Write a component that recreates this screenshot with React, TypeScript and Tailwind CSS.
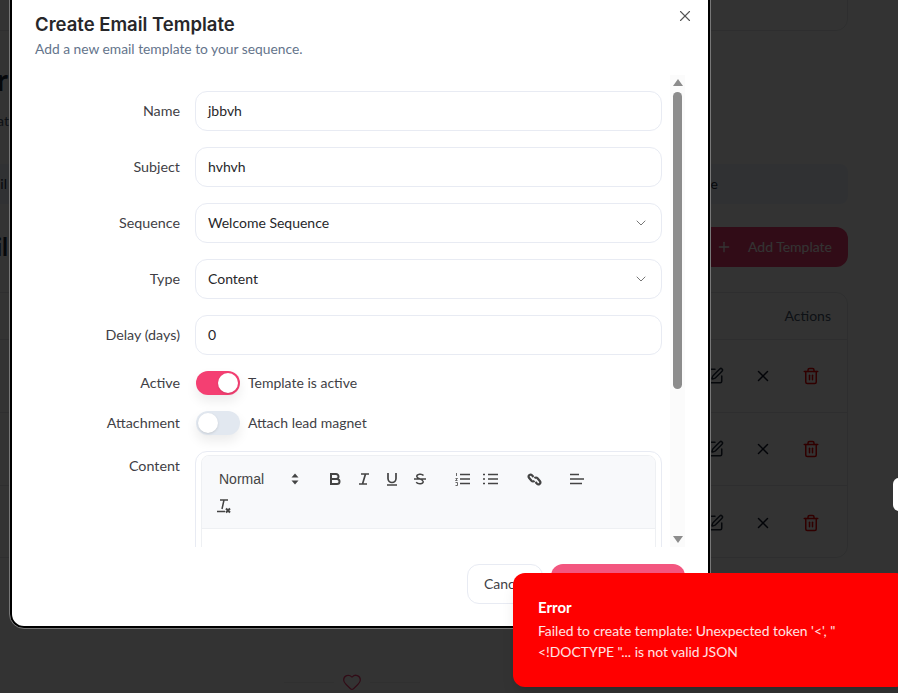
import { ChevronDown, Heart, Plus, SquarePen, Trash2, X } from "lucide-react"

const fields = [
  { label: "Name", value: "jbbvh" },
  { label: "Subject", value: "hvhvh" },
  { label: "Sequence", value: "Welcome Sequence", select: true },
  { label: "Type", value: "Content", select: true },
  { label: "Delay (days)", value: "0" },
]

function Toggle({ on }: { on: boolean }) {
  return (
    <div
      className={`flex h-6 w-[44px] items-center rounded-full p-[2px] shadow-[0_6px_12px_rgba(0,0,0,0.08)] ${
        on ? "justify-end bg-[#f43f72]" : "justify-start bg-[#e2e8f0]"
      }`}
    >
      <div className="h-5 w-5 rounded-full bg-white shadow-sm" />
    </div>
  )
}

function Toolbar() {
  return (
    <div className="h-[73px] border-b border-[#eef0f3] bg-[#f8f9fb] pl-[17px] text-[#444]">
      <div className="flex h-[46px] items-center">
        <span className="w-[72px] font-['Liberation_Sans',sans-serif] text-sm">Normal</span>
        <svg width="8" height="12" viewBox="0 0 8 12" className="mr-[29px] fill-[#444]">
          <path d="M4 0.5 7.5 4.5H.5zM4 11.5.5 7.5h7z" />
        </svg>
        <svg width="14" height="14" viewBox="0 0 14 14" fill="none" stroke="#444" strokeWidth="2" className="mr-[15px]">
          <path d="M3 2h5a2.5 2.5 0 0 1 0 5H3zM3 7h6a2.5 2.5 0 0 1 0 5H3z" />
        </svg>
        <svg width="14" height="14" viewBox="0 0 14 14" fill="none" stroke="#444" strokeWidth="1.7" className="mr-[14px]">
          <path d="M4 2h8M2 12h8M8.5 2 5.5 12" />
        </svg>
        <svg width="14" height="14" viewBox="0 0 14 14" fill="none" stroke="#444" strokeWidth="1.7" className="mr-[14px]">
          <path d="M3 1v5.5a4 4 0 0 0 8 0V1M2 13h10" />
        </svg>
        <svg width="14" height="14" viewBox="0 0 14 14" fill="none" stroke="#444" strokeWidth="1.5" className="mr-[28px]">
          <path d="M10.5 3.5C9 1.5 3.5 1.8 3.8 4.8 4 6.5 9.8 7 10.2 9.5 10.5 12.3 5 12.5 3.2 10.3M1 7h12" />
        </svg>
        <svg width="15" height="14" viewBox="0 0 15 14" fill="none" stroke="#444" strokeWidth="1.7" className="mr-[13px]">
          <path d="M5 2.5h10M5 7h10M5 11.5h10" />
          <path d="M1.5 1v3M.5 6.5h2L.5 8.5h2M.5 10.5h2v3h-2" strokeWidth="0.8" />
        </svg>
        <svg width="15" height="14" viewBox="0 0 15 14" fill="none" stroke="#444" strokeWidth="1.7" className="mr-[29px]">
          <path d="M5 2.5h10M5 7h10M5 11.5h10M0 2.5h2M0 7h2M0 11.5h2" />
        </svg>
        <svg width="15" height="15" viewBox="0 0 15 15" fill="none" stroke="#444" strokeWidth="2.2" className="mr-[28px]">
          <path d="M6.5 5 5 3.2a2 2 0 0 0-3 2.6l2.5 3a2 2 0 0 0 3 0M8.5 10l1.5 1.8a2 2 0 0 0 3-2.6l-2.5-3a2 2 0 0 0-3 0" />
        </svg>
        <svg width="14" height="14" viewBox="0 0 14 14" fill="none" stroke="#444" strokeWidth="1.7">
          <path d="M0 2.5h9M0 7h14M0 11.5h12" />
        </svg>
      </div>
      <svg width="16" height="16" viewBox="0 0 16 16" fill="none" stroke="#444" className="mt-[-4px] ml-[-3px]">
        <path d="M4 2h8M8 2 6 11M1 13.5h8" strokeWidth="1.5" />
        <path d="M10 10.5l4 4M14 10.5l-4 4" strokeWidth="2" />
      </svg>
    </div>
  )
}

function Modal() {
  return (
    <div className="absolute left-[10px] top-[-20px] h-[648px] w-[700px] rounded-[14px] border-2 border-black bg-white font-['Lato',sans-serif] outline outline-1 outline-[#777]">
      <X className="absolute right-[14px] top-[25px] h-[18px] w-[18px] text-[#555]" strokeWidth={1.5} />
      <div className="px-[23px] pt-[28px]">
        <h2 className="font-['Inter',sans-serif] text-[18.5px] font-semibold leading-7 text-[#27272a]">Create Email Template</h2>
        <p className="mt-[1px] text-[13.8px] leading-5 text-[#64748b]">Add a new email template to your sequence.</p>
      </div>

      <div className="mt-[16px] flex h-[472px] overflow-hidden">
        <div className="w-[650px] shrink-0 pt-[16px]">
          {fields.map((f) => (
            <div key={f.label} className="mb-4 flex h-10 items-center">
              <label className="w-[168px] text-right text-[14.3px] text-[#3f3f46]">{f.label}</label>
              <div className="ml-[15px] flex h-10 w-[467px] items-center justify-between rounded-xl border border-[#e8ebf3] px-3 text-sm text-[#27272a]">
                {f.value}
                {f.select && <ChevronDown className="h-4 w-4 text-[#777]" strokeWidth={1.5} />}
              </div>
            </div>
          ))}
          <div className="flex h-6 items-center">
            <label className="w-[168px] text-right text-[14.3px] text-[#3f3f46]">Active</label>
            <div className="ml-[16px]"><Toggle on /></div>
            <span className="ml-2 text-sm text-[#3f3f46]">Template is active</span>
          </div>
          <div className="mt-4 flex h-6 items-center">
            <label className="w-[168px] text-right text-[14.3px] text-[#3f3f46]">Attachment</label>
            <div className="ml-[16px]"><Toggle on={false} /></div>
            <span className="ml-2 text-sm text-[#3f3f46]">Attach lead magnet</span>
          </div>
          <div className="mt-[16px] flex">
            <label className="w-[168px] pt-[4px] text-right text-[14.3px] text-[#3f3f46]">Content</label>
            <div className="ml-[15px] h-[200px] w-[467px] rounded-xl border border-[#e8ebf3] px-[5px] py-[3px]">
              <div className="h-full overflow-hidden rounded-t-lg border border-[#eef0f3]">
                <Toolbar />
              </div>
            </div>
          </div>
        </div>
        <div className="ml-[8px] flex h-full w-[15px] flex-col items-center bg-[#fbfbfb]">
          <div className="mt-[4px] h-0 w-0 border-x-[5px] border-b-[7px] border-x-transparent border-b-[#8c8c8c]" />
          <div className="mt-[6px] h-[297px] w-[9px] rounded-full bg-[#8c8c8c]" />
          <div className="mt-auto mb-[4px] h-0 w-0 border-x-[5px] border-t-[7px] border-x-transparent border-t-[#8c8c8c]" />
        </div>
      </div>

      <div className="mt-[17px] flex justify-end gap-2 pr-[23px]">
        <button className="h-10 w-[76px] rounded-xl border border-[#e8ebf3] bg-white pl-[16px] text-left text-sm text-[#3f3f46]">Cancel</button>
        <button className="h-10 w-[134px] rounded-xl bg-[#f3567f] text-sm text-white">Create Template</button>
      </div>
    </div>
  )
}

function BackgroundPage() {
  return (
    <div className="ml-[-200px] flex h-full w-[1048px] flex-col font-['Lato',sans-serif] text-[#1e293b]">
      <div className="mt-[-40px] h-[71px] w-full rounded-xl border border-[#e5e7eb]" />
      <h1 className="mt-[30px] pr-[840px] text-right text-3xl font-bold leading-9">Manager</h1>
      <p className="mt-[14px] pr-[839px] text-right text-sm text-[#475569]">Format</p>
      <div className="mt-[33px] flex h-10 w-full items-center justify-between rounded-lg bg-[#eff6ff] pr-[130px] text-sm">
        <span className="w-[207px] text-right">Email</span>
        <span>Manage sequence</span>
      </div>
      <div className="mt-[23px] flex h-10 w-full items-center justify-between">
        <span className="w-[208px] text-right text-2xl font-bold">Email</span>
        <div className="flex h-10 w-[160px] items-center justify-end gap-[16px] rounded-xl bg-[#f43f72] pr-[16px] text-sm text-white">
          <Plus className="h-4 w-4" />
          Add Template
        </div>
      </div>
      <div className="mt-[25px] h-[266px] w-full rounded-xl border border-[#e5e7eb]">
        <div className="flex h-[47px] items-center justify-end border-b border-[#e5e7eb] pr-[16px] text-sm text-[#475569]">Actions</div>
        {[0, 1, 2].map((i) => (
          <div key={i} className="flex h-[73px] items-center justify-end gap-[30px] border-b border-[#e5e7eb] pr-[27px] last:border-0">
            <SquarePen className="h-[18px] w-[18px] text-[#1e293b]" />
            <X className="h-[18px] w-[18px] text-[#0f172a]" />
            <Trash2 className="h-[18px] w-[18px] text-[#ef0000]" />
          </div>
        ))}
      </div>
      <div className="mt-[114px] flex items-center justify-center pl-[56px]">
        <div className="h-px w-[50px] bg-[#eeeeee]" />
        <Heart className="mx-2 h-5 w-5 text-[#f43f72]" strokeWidth={1.5} />
        <div className="h-px w-[50px] bg-[#eeeeee]" />
      </div>
    </div>
  )
}

export default function App() {
  return (
    <div className="relative h-[693px] w-[898px] overflow-hidden bg-white">
      <BackgroundPage />
      <div className="absolute inset-0 bg-black/80" />
      <div className="absolute right-[-10px] top-[478px] h-[33px] w-[15px] rounded-md bg-white" />
      <Modal />
      <div className="absolute left-[513px] top-[573px] h-[114px] w-[395px] rounded-xl bg-[#ff0000] px-[25px] pt-[24px] font-['Lato',sans-serif] text-white shadow-lg">
        <div className="text-[15px] font-bold leading-5">Error</div>
        <div className="mt-[3px] w-[330px] text-[13.9px] leading-[21px] text-white/90">
          Failed to create template: Unexpected token '&lt;', "&lt;!DOCTYPE "... is not valid JSON
        </div>
      </div>
    </div>
  )
}
